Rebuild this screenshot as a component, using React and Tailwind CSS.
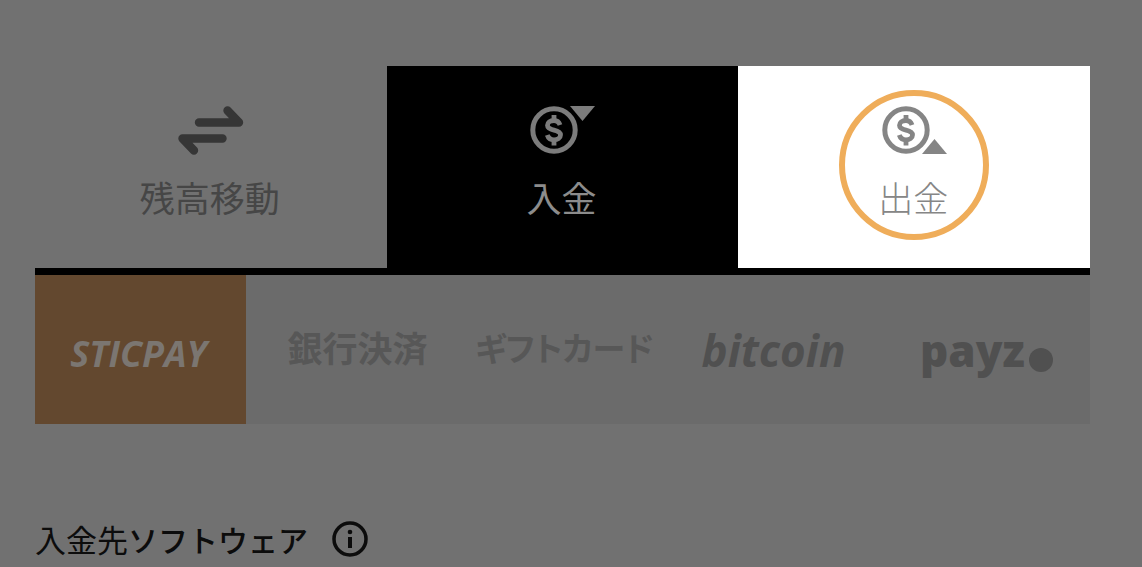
import { useState } from "react";

function TransferIcon() {
  return (
    <svg width="68" height="50" viewBox="0 0 68 50" fill="none" stroke="currentColor" strokeWidth="8.4" strokeLinecap="round" strokeLinejoin="round" aria-hidden="true">
      <path d="M22 17.5H62L50.5 5.5" />
      <path d="M45.5 33.5H5.5L17 45.5" />
    </svg>
  );
}

function Coin() {
  return (
    <g fill="none" stroke="currentColor">
      <circle cx="26" cy="25" r="21.2" strokeWidth="5" />
      <path d="M32 20C31 17 29 15.5 26 15.5C22 15.5 19.5 17.5 19.5 20.3C19.5 23.5 22.5 24.3 26 25.1C29.5 25.9 32.5 26.8 32.5 30C32.5 33 29.5 34.8 26 34.8C22.8 34.8 20.3 33.3 19.3 30" strokeWidth="4.8" />
      <path d="M26 10V16M26 34V40.5" strokeWidth="4.8" />
    </g>
  );
}

function DepositIcon() {
  return (
    <svg width="68" height="50" viewBox="0 0 68 50" aria-hidden="true">
      <Coin />
      <path d="M42 1H67L54.5 16Z" fill="currentColor" />
    </svg>
  );
}

function WithdrawIcon() {
  return (
    <svg width="68" height="50" viewBox="0 0 68 50" aria-hidden="true">
      <Coin />
      <path d="M42 49H67L54.5 34Z" fill="currentColor" />
    </svg>
  );
}

const tabs = [
  { id: "transfer", label: "残高移動", Icon: TransferIcon, style: "text-[#464646] font-normal", iconStyle: "text-[#363636]" },
  { id: "deposit", label: "入金", Icon: DepositIcon, style: "bg-black text-[#8c8c8c] font-normal", iconStyle: "text-[#7c7c7c]" },
  { id: "withdraw", label: "出金", Icon: WithdrawIcon, style: "bg-white text-[#868686] font-light", iconStyle: "text-[#858585]", highlight: true },
];

const methods = [
  { id: "sticpay", label: "STICPAY", style: "font-['Open_Sans'] text-[36px] font-bold italic pt-2 pr-1" },
  { id: "bank", label: "銀行決済", style: "text-[35px] font-bold text-[#575757] pb-1 pl-3" },
  { id: "gift", label: "ギフトカード", style: "text-[33px] font-bold text-[#575757] pb-1 pl-1 [font-feature-settings:'palt']" },
  { id: "bitcoin", label: "bitcoin", style: "font-['Open_Sans'] text-[44px] font-bold italic text-[#505050]" },
  { id: "payz", label: "payz", dot: true, style: "font-['Open_Sans'] text-[44px] font-extrabold text-[#505050] pl-1" },
];

export default function App() {
  const [method, setMethod] = useState("sticpay");

  return (
    <main className="min-h-screen bg-[#717171] pt-[66px] pr-[52px] pl-[35px] font-['Noto_Sans_CJK_JP',sans-serif]">
      <nav className="grid grid-cols-3 border-b-7 border-black">
        {tabs.map(({ id, label, Icon, style, iconStyle, highlight }) => (
          <button key={id} type="button" className={`relative flex flex-col items-center pt-[39px] pb-[46px] ${style}`}>
            <span className={iconStyle}>
              <Icon />
            </span>
            <span className="mt-[17px] pr-[2px] text-[35px] leading-[50px]">{label}</span>
            {highlight ? (
              <span className="absolute top-6 left-1/2 size-[150px] -translate-x-1/2 rounded-full border-6 border-[#efad5a]" />
            ) : null}
          </button>
        ))}
      </nav>

      <div className="grid h-[149px] grid-cols-5 bg-[#6b6b6b]">
        {methods.map(({ id, label, dot, style }) => (
          <button
            key={id}
            type="button"
            onClick={() => setMethod(id)}
            className={`flex items-center justify-center whitespace-nowrap ${style} ${method === id ? "bg-[#63482f] text-[#7b7671]" : ""}`}
          >
            {label}
            {dot ? <span className="mt-5 ml-1 size-6 rounded-full bg-[#505050]" /> : null}
          </button>
        ))}
      </div>

      <div className="mt-[92px] flex items-center text-[31px] leading-[46px] text-[#0c0c0c]">
        <h2 className="font-normal">
          入金先<span className="text-[30px] font-medium">ソフトウェア</span>
        </h2>
        <button type="button" aria-label="入金先ソフトウェア" className="ml-6">
          <svg width="36" height="36" viewBox="0 0 36 36" fill="none" stroke="currentColor" aria-hidden="true">
            <circle cx="18" cy="18" r="16" strokeWidth="3.5" />
            <path d="M18 16V27" strokeWidth="4" />
            <circle cx="18" cy="11" r="2.3" fill="currentColor" stroke="none" />
          </svg>
        </button>
      </div>
    </main>
  );
}
